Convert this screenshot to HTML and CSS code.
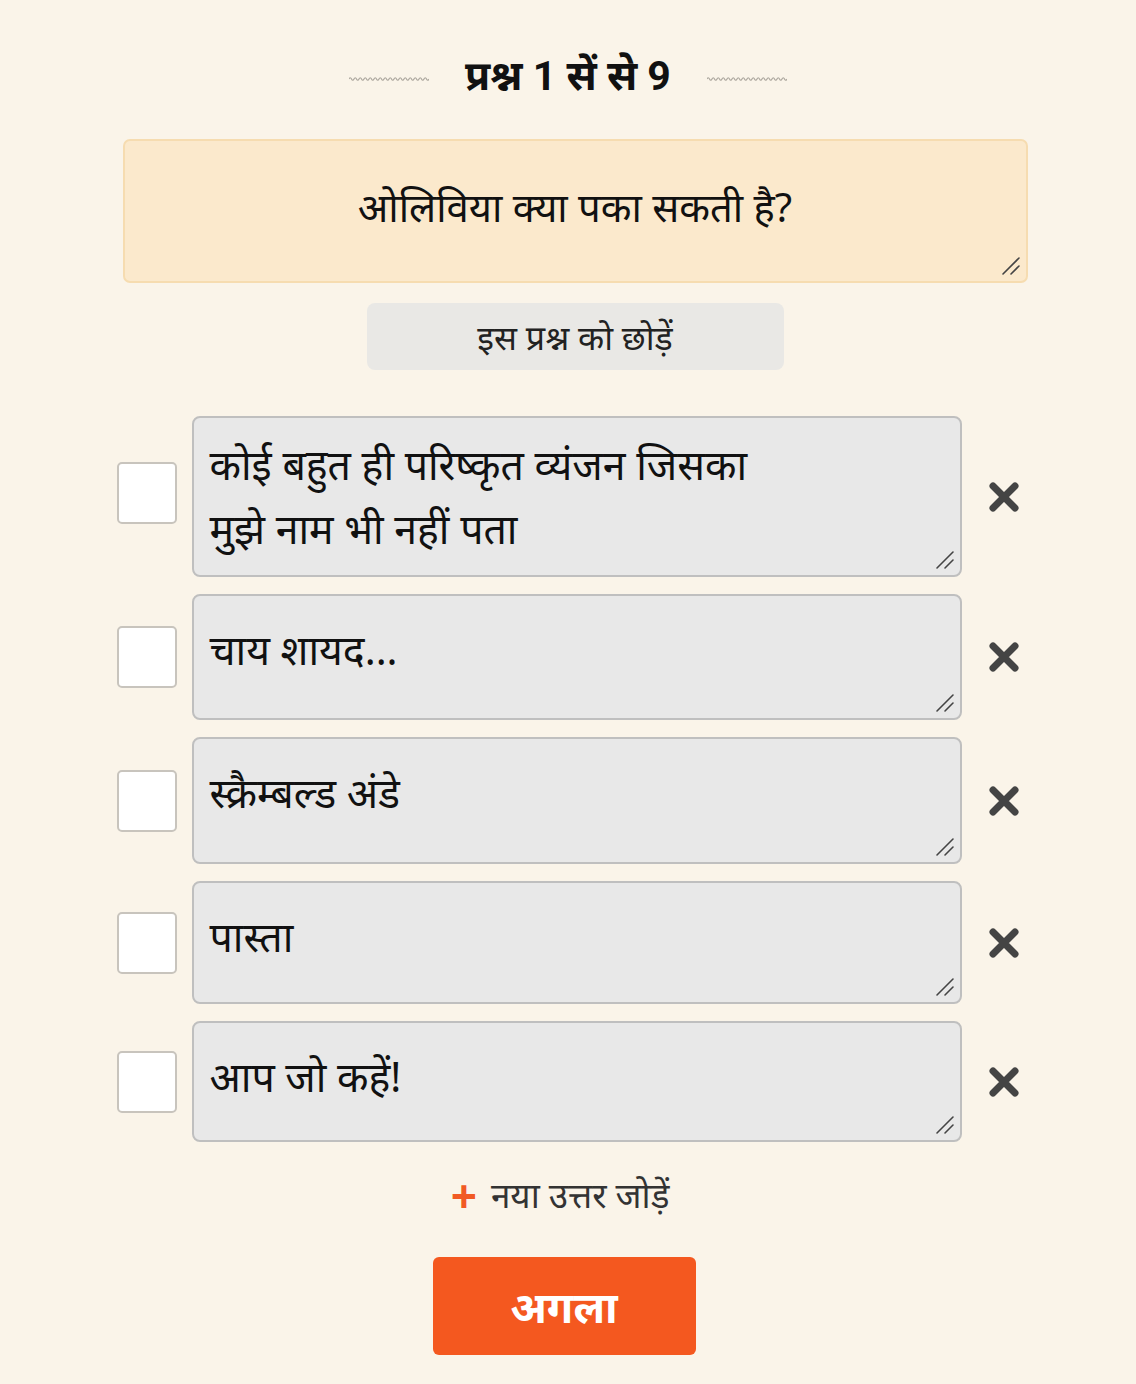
FILE: index.html
```html
<!DOCTYPE html>
<html lang="hi">
<head>
<meta charset="utf-8">
<title>प्रश्न</title>
<link rel="stylesheet" href="styles.css">
</head>
<body>
<main class="page">
  <header class="heading">
    <svg class="wave" width="80" height="6" viewBox="0 0 80 6"><path d="M0 3 Q1.25 0.5 2.5 3 T5 3 T7.5 3 T10 3 T12.5 3 T15 3 T17.5 3 T20 3 T22.5 3 T25 3 T27.5 3 T30 3 T32.5 3 T35 3 T37.5 3 T40 3 T42.5 3 T45 3 T47.5 3 T50 3 T52.5 3 T55 3 T57.5 3 T60 3 T62.5 3 T65 3 T67.5 3 T70 3 T72.5 3 T75 3 T77.5 3 T80 3" fill="none" stroke="#aaa59c" stroke-width="1.2"/></svg>
    <h1 class="title">प्रश्न 1 सें से 9</h1>
    <svg class="wave" width="80" height="6" viewBox="0 0 80 6"><path d="M0 3 Q1.25 0.5 2.5 3 T5 3 T7.5 3 T10 3 T12.5 3 T15 3 T17.5 3 T20 3 T22.5 3 T25 3 T27.5 3 T30 3 T32.5 3 T35 3 T37.5 3 T40 3 T42.5 3 T45 3 T47.5 3 T50 3 T52.5 3 T55 3 T57.5 3 T60 3 T62.5 3 T65 3 T67.5 3 T70 3 T72.5 3 T75 3 T77.5 3 T80 3" fill="none" stroke="#aaa59c" stroke-width="1.2"/></svg>
  </header>

  <div class="field question-field">
    <textarea class="question">ओलिविया क्या पका सकती है?</textarea>
    <svg class="grip" width="24" height="24" viewBox="0 0 24 24"><path d="M2 18 L18 2 M10 18 L18 10" stroke="#444" stroke-width="1.6" stroke-linecap="round"/></svg>
  </div>

  <button class="skip" type="button">इस प्रश्न को छोड़ें</button>

  <section class="answers">
    <div class="row">
      <span class="check check-up"></span>
      <div class="field">
        <textarea class="answer answer-1">कोई बहुत ही परिष्कृत व्यंजन जिसका
मुझे नाम भी नहीं पता</textarea>
        <svg class="grip" width="24" height="24" viewBox="0 0 24 24"><path d="M2 18 L18 2 M10 18 L18 10" stroke="#444" stroke-width="1.6" stroke-linecap="round"/></svg>
      </div>
      <span class="remove"><svg width="32" height="32" viewBox="0 0 32 32"><path d="M5 5 L27 27 M27 5 L5 27" stroke="#444" stroke-width="7" stroke-linecap="round"/></svg></span>
    </div>
    <div class="row">
      <span class="check"></span>
      <div class="field">
        <textarea class="answer answer-2">चाय शायद...</textarea>
        <svg class="grip" width="24" height="24" viewBox="0 0 24 24"><path d="M2 18 L18 2 M10 18 L18 10" stroke="#444" stroke-width="1.6" stroke-linecap="round"/></svg>
      </div>
      <span class="remove"><svg width="32" height="32" viewBox="0 0 32 32"><path d="M5 5 L27 27 M27 5 L5 27" stroke="#444" stroke-width="7" stroke-linecap="round"/></svg></span>
    </div>
    <div class="row">
      <span class="check"></span>
      <div class="field">
        <textarea class="answer answer-3">स्क्रैम्बल्ड अंडे</textarea>
        <svg class="grip" width="24" height="24" viewBox="0 0 24 24"><path d="M2 18 L18 2 M10 18 L18 10" stroke="#444" stroke-width="1.6" stroke-linecap="round"/></svg>
      </div>
      <span class="remove"><svg width="32" height="32" viewBox="0 0 32 32"><path d="M5 5 L27 27 M27 5 L5 27" stroke="#444" stroke-width="7" stroke-linecap="round"/></svg></span>
    </div>
    <div class="row">
      <span class="check"></span>
      <div class="field">
        <textarea class="answer answer-4">पास्ता</textarea>
        <svg class="grip" width="24" height="24" viewBox="0 0 24 24"><path d="M2 18 L18 2 M10 18 L18 10" stroke="#444" stroke-width="1.6" stroke-linecap="round"/></svg>
      </div>
      <span class="remove"><svg width="32" height="32" viewBox="0 0 32 32"><path d="M5 5 L27 27 M27 5 L5 27" stroke="#444" stroke-width="7" stroke-linecap="round"/></svg></span>
    </div>
    <div class="row">
      <span class="check"></span>
      <div class="field">
        <textarea class="answer answer-5">आप जो कहें!</textarea>
        <svg class="grip" width="24" height="24" viewBox="0 0 24 24"><path d="M2 18 L18 2 M10 18 L18 10" stroke="#444" stroke-width="1.6" stroke-linecap="round"/></svg>
      </div>
      <span class="remove"><svg width="32" height="32" viewBox="0 0 32 32"><path d="M5 5 L27 27 M27 5 L5 27" stroke="#444" stroke-width="7" stroke-linecap="round"/></svg></span>
    </div>
  </section>

  <button class="add" type="button"><span class="plus">+</span><span>नया उत्तर जोड़ें</span></button>

  <button class="next" type="button">अगला</button>
</main>
</body>
</html>
```

FILE: styles.css
```css
html, body {
  margin: 0;
  padding: 0;
}
body {
  background: #faf4e9;
  font-family: "Noto Sans", "Noto Sans Devanagari", sans-serif;
  color: #111;
}
.page {
  display: flex;
  flex-direction: column;
  align-items: center;
  padding-top: 52px;
  padding-bottom: 30px;
}
.heading {
  display: flex;
  align-items: center;
  gap: 36px;
  height: 54px;
}
.title {
  margin: 0;
  font-family: Roboto, "Noto Sans Devanagari", sans-serif;
  font-size: 41px;
  font-weight: 700;
  color: #111;
}
.field {
  position: relative;
  display: flex;
}
.grip {
  position: absolute;
  right: 3px;
  bottom: 3px;
  pointer-events: none;
}
.question-field {
  margin-top: 33px;
  margin-left: 14px;
}
.question {
  box-sizing: border-box;
  width: 905px;
  height: 144px;
  margin: 0;
  background: #fbe9cc;
  border: 2px solid #f6dcb0;
  border-radius: 7px;
  font-family: "Noto Sans", "Noto Sans Devanagari", sans-serif;
  font-size: 40px;
  text-align: center;
  color: #111;
  padding: 38px 20px 20px;
  outline: none;
  resize: none;
}
.skip {
  margin-top: 20px;
  margin-left: 14px;
  width: 417px;
  height: 67px;
  border: none;
  border-radius: 8px;
  background: #e9e8e5;
  font-family: "Noto Sans", "Noto Sans Devanagari", sans-serif;
  font-size: 34px;
  color: #222;
}
.answers {
  margin-top: 46px;
  display: flex;
  flex-direction: column;
  gap: 17px;
}
.row {
  display: flex;
  align-items: center;
}
.check {
  box-sizing: border-box;
  width: 60px;
  height: 62px;
  background: #fff;
  border: 2px solid #c8c4bd;
  border-radius: 5px;
  margin-right: 15px;
}
.check-up {
  margin-bottom: 8px;
}
.answer {
  box-sizing: border-box;
  width: 770px;
  margin: 0;
  background: #e8e8e8;
  border: 2px solid #bfbfbf;
  border-radius: 8px;
  font-family: "Noto Sans", "Noto Sans Devanagari", sans-serif;
  font-size: 41px;
  line-height: 64px;
  color: #111;
  padding: 21px 16px 10px;
  outline: none;
  resize: none;
}
.answer-1 { height: 161px; padding-top: 14px; }
.answer-2 { height: 126px; }
.answer-3 { height: 127px; }
.answer-4 { height: 123px; }
.answer-5 { height: 121px; }
.remove {
  display: flex;
  width: 32px;
  height: 32px;
  margin-left: 26px;
}
.add {
  margin-top: 29px;
  display: flex;
  align-items: center;
  gap: 14px;
  background: none;
  border: none;
  font-family: "Noto Sans", "Noto Sans Devanagari", sans-serif;
  font-size: 35px;
  color: #333;
  padding: 0;
  margin-left: -16px;
}
.plus {
  color: #f15a24;
  font-size: 46px;
  font-weight: 700;
  line-height: 1;
}
.next {
  margin-top: 39px;
  width: 263px;
  height: 98px;
  border: none;
  border-radius: 6px;
  background: #f4581f;
  color: #fff;
  font-family: "Noto Sans", "Noto Sans Devanagari", sans-serif;
  font-size: 43px;
  font-weight: 700;
  margin-right: 8px;
}
```
